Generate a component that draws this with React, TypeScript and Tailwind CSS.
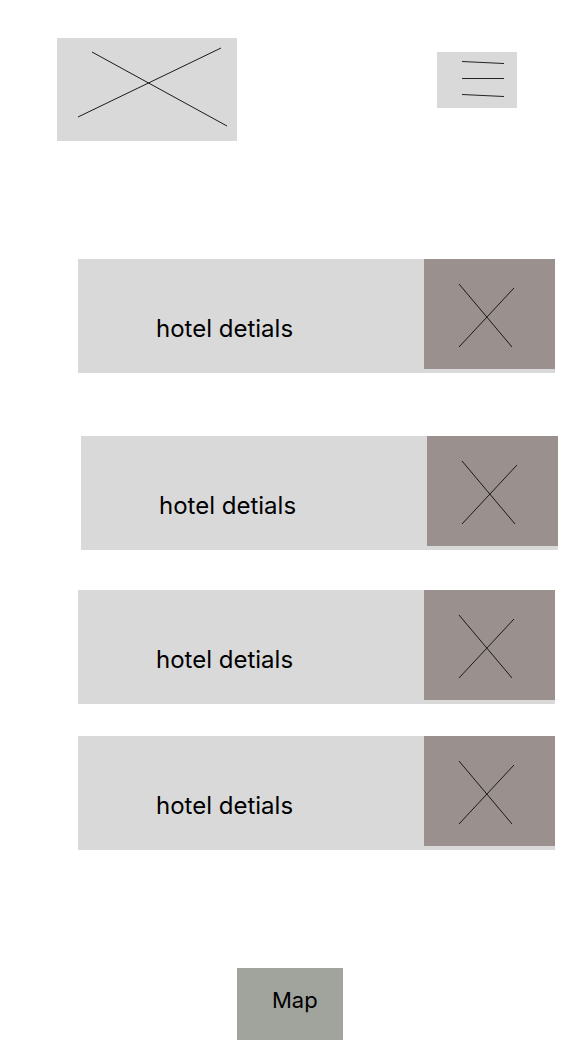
const Cross = () => (
  <svg width="131" height="110" viewBox="0 0 131 110" className="block">
    <line x1="35" y1="25" x2="88" y2="88" stroke="#1a1a1a" strokeWidth="1" />
    <line x1="90" y1="29" x2="35" y2="88" stroke="#1a1a1a" strokeWidth="1" />
  </svg>
);

const HotelCard = ({ offset }: { offset: string }) => (
  <div className={`flex w-[477px] h-[114px] bg-[#d9d9d9] ${offset}`}>
    <div className="flex-1 pl-[78px] pt-[56px] text-[24px] leading-[28px] text-black">
      hotel detials
    </div>
    <div className="w-[131px] h-[110px] bg-[#9a908e]">
      <Cross />
    </div>
  </div>
);

export default function App() {
  return (
    <div
      className="w-[588px] h-[1041px] bg-white overflow-hidden"
      style={{ fontFamily: "Inter, 'Noto Sans', sans-serif" }}
    >
      {/* Header: logo placeholder and menu button */}
      <div className="flex items-start pl-[57px] pt-[38px] pr-[71px]">
        <div className="w-[180px] h-[103px] bg-[#d9d9d9]">
          <svg width="180" height="103" viewBox="0 0 180 103" className="block">
            <line x1="35" y1="14" x2="170" y2="88" stroke="#1a1a1a" strokeWidth="1" />
            <line x1="21" y1="79" x2="164" y2="10" stroke="#1a1a1a" strokeWidth="1" />
          </svg>
        </div>
        <div className="ml-auto mt-[14px] w-[80px] h-[56px] bg-[#d9d9d9]">
          <svg width="80" height="56" viewBox="0 0 80 56" className="block">
            <line x1="25" y1="9.5" x2="67" y2="11.5" stroke="#222" strokeWidth="1.2" />
            <line x1="25" y1="26.5" x2="67" y2="26.5" stroke="#222" strokeWidth="1.2" />
            <line x1="25" y1="42.5" x2="67" y2="44.5" stroke="#222" strokeWidth="1.2" />
          </svg>
        </div>
      </div>

      {/* Hotel list */}
      <div className="flex flex-col mt-[118px]">
        <HotelCard offset="ml-[78px]" />
        <HotelCard offset="ml-[81px] mt-[63px]" />
        <HotelCard offset="ml-[78px] mt-[40px]" />
        <HotelCard offset="ml-[78px] mt-[32px]" />
      </div>

      {/* Map button */}
      <div className="ml-[237px] mt-[118px] w-[106px] h-[72px] bg-[#a1a49d] pl-[35px] pt-[19px] text-[22px] leading-[26px] text-black">
        Map
      </div>
    </div>
  );
}
